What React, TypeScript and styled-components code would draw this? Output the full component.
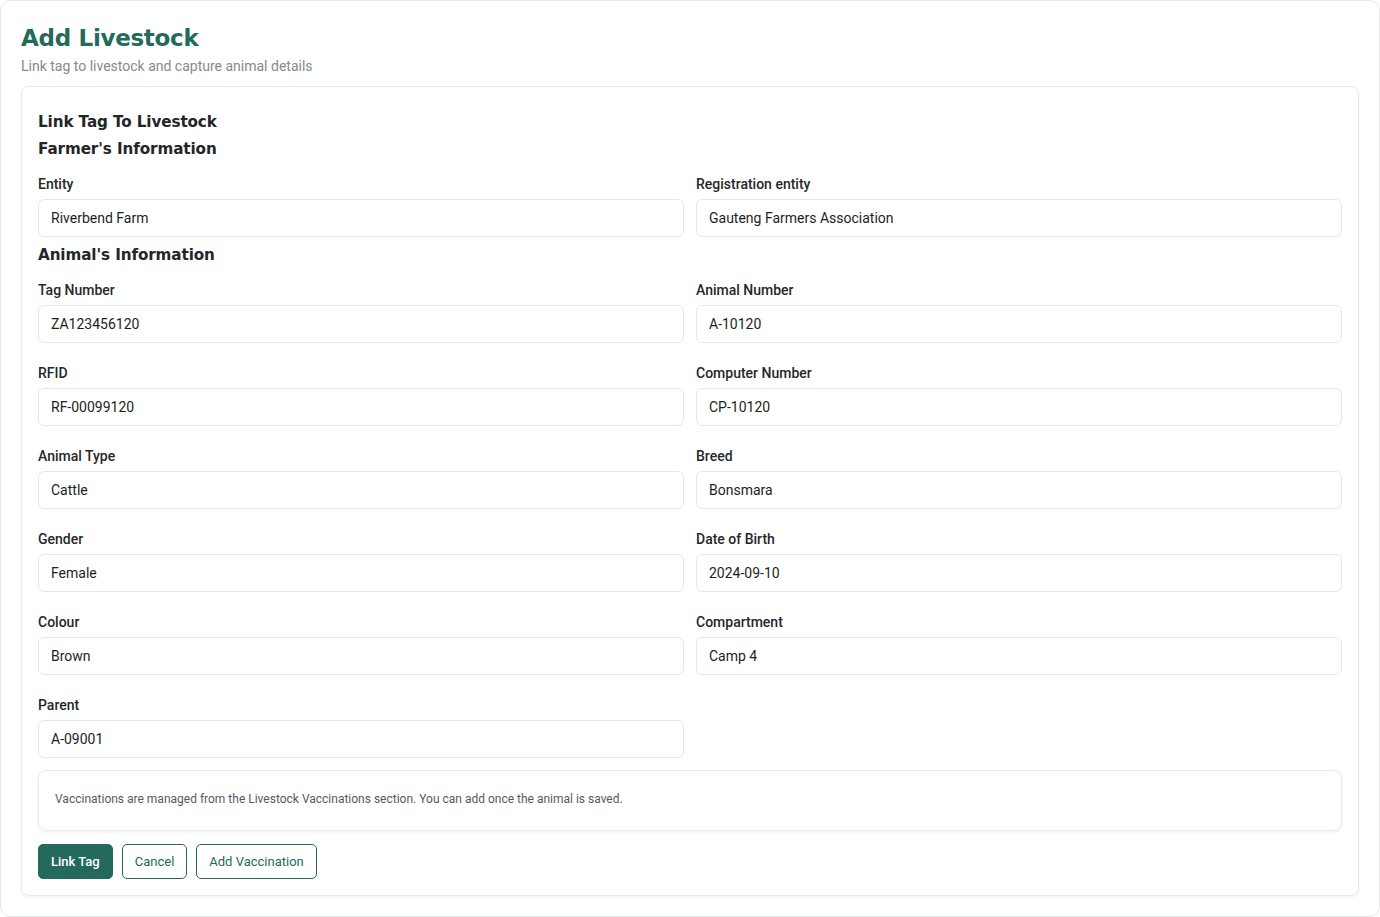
import React from "react"
import styled, { createGlobalStyle } from "styled-components"

const GlobalStyle = createGlobalStyle`
  html, body {
    margin: 0;
    padding: 0;
    background: #ffffff;
  }
  body {
    font-family: Roboto, "Liberation Sans", Arial, sans-serif;
    color: #1f2326;
  }
  * {
    box-sizing: border-box;
  }
`

const Page = styled.div`
  width: 1380px;
  min-height: 917px;
  border: 1px solid #e4e9ec;
  border-radius: 10px;
  padding: 20px;
  background: #fff;
`

const Title = styled.h1`
  margin: 0;
  font-family: "DejaVu Sans", Lato, sans-serif;
  font-weight: 700;
  font-size: 23px;
  letter-spacing: -0.3px;
  line-height: 34px;
  color: #236a5b;
`

const Subtitle = styled.p`
  margin: 1px 0 10px;
  font-size: 14px;
  line-height: 20px;
  color: #858a8e;
`

const Card = styled.div`
  border: 1px solid #e6ebee;
  border-radius: 8px;
  box-shadow: 0 1px 3px rgba(30, 50, 60, 0.08);
  padding: 22px 16px 16px;
`

const SectionTitle = styled.h3`
  margin: 0;
  font-family: "DejaVu Sans", Lato, sans-serif;
  font-weight: 700;
  font-size: 15.2px;
  letter-spacing: -0.1px;
  line-height: 27px;
  color: #222629;
`

const Grid = styled.div`
  display: grid;
  grid-template-columns: 1fr 1fr;
  column-gap: 12px;
  row-gap: 21px;
  margin-top: 12px;
  margin-bottom: 5px;
`

const Field = styled.div`
  display: flex;
  flex-direction: column;
`

const Label = styled.label`
  font-size: 14px;
  font-weight: 500;
  line-height: 18px;
  color: #24282b;
  margin-bottom: 6px;
`

const Input = styled.input`
  height: 38px;
  width: 100%;
  border: 1px solid #e3e8eb;
  border-radius: 6px;
  padding: 0 12px;
  font-family: Roboto, "Liberation Sans", Arial, sans-serif;
  font-size: 14px;
  color: #1c1f22;
  background: #fff;
  outline: none;
`

const Note = styled.div`
  margin-top: 12px;
  border: 1px solid #e6ebee;
  border-radius: 8px;
  box-shadow: 0 1px 3px rgba(30, 50, 60, 0.08);
  padding: 21px 16px 24px;
  font-size: 12px;
  line-height: 14px;
  color: #555b60;
`

const Actions = styled.div`
  display: flex;
  gap: 9px;
  margin-top: 13px;
`

const Button = styled.button<{ $primary?: boolean }>`
  height: 35px;
  padding: 0 12px;
  border-radius: 5px;
  border: 1px solid #236a5b;
  font-family: Roboto, "Liberation Sans", Arial, sans-serif;
  font-size: 13px;
  font-weight: ${({ $primary }) => ($primary ? 500 : 400)};
  background: ${({ $primary }) => ($primary ? "#236a5b" : "#fff")};
  color: ${({ $primary }) => ($primary ? "#fff" : "#236a5b")};
  cursor: pointer;
`

const farmer = [
  { label: "Entity", value: "Riverbend Farm" },
  { label: "Registration entity", value: "Gauteng Farmers Association" },
]

const animal = [
  { label: "Tag Number", value: "ZA123456120" },
  { label: "Animal Number", value: "A-10120" },
  { label: "RFID", value: "RF-00099120" },
  { label: "Computer Number", value: "CP-10120" },
  { label: "Animal Type", value: "Cattle" },
  { label: "Breed", value: "Bonsmara" },
  { label: "Gender", value: "Female" },
  { label: "Date of Birth", value: "2024-09-10" },
  { label: "Colour", value: "Brown" },
  { label: "Compartment", value: "Camp 4" },
  { label: "Parent", value: "A-09001" },
]

function Fields({ items }: { items: { label: string; value: string }[] }) {
  return (
    <Grid>
      {items.map((f) => (
        <Field key={f.label}>
          <Label>{f.label}</Label>
          <Input defaultValue={f.value} readOnly />
        </Field>
      ))}
    </Grid>
  )
}

export default function App() {
  return (
    <>
      <GlobalStyle />
      <Page>
        <Title>Add Livestock</Title>
        <Subtitle>Link tag to livestock and capture animal details</Subtitle>
        <Card>
          <SectionTitle>Link Tag To Livestock</SectionTitle>
          <SectionTitle>Farmer's Information</SectionTitle>
          <Fields items={farmer} />
          <SectionTitle>Animal's Information</SectionTitle>
          <Fields items={animal} />
          <Note>
            Vaccinations are managed from the Livestock Vaccinations section. You can add once the animal is saved.
          </Note>
          <Actions>
            <Button $primary>Link Tag</Button>
            <Button>Cancel</Button>
            <Button>Add Vaccination</Button>
          </Actions>
        </Card>
      </Page>
    </>
  )
}
